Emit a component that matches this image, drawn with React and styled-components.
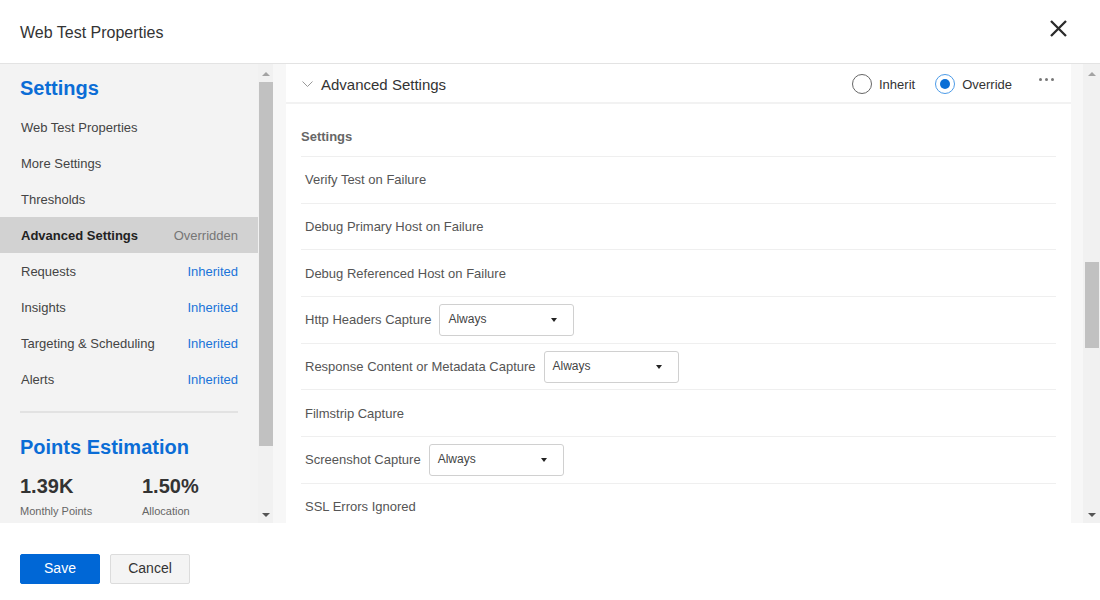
import React from 'react';
import styled, { createGlobalStyle } from 'styled-components';

const GlobalStyle = createGlobalStyle`
  body {
    margin: 0;
    font-family: "Liberation Sans", Arial, sans-serif;
    color: #333;
    background: #fff;
  }
`;

const Page = styled.div`
  width: 1100px;
  height: 600px;
  display: flex;
  flex-direction: column;
  overflow: hidden;
`;

const Header = styled.div`
  height: 64px;
  flex: none;
  display: flex;
  align-items: center;
  justify-content: space-between;
  padding: 0 33px 0 20px;
  box-sizing: border-box;
  border-bottom: 1px solid #e3e3e3;
`;

const Title = styled.div`
  font-size: 16px;
  color: #333;
  margin-top: 2px;
`;

const CloseButton = styled.button`
  border: 0;
  background: none;
  padding: 0;
  display: flex;
  margin-top: -6px;
  cursor: pointer;
`;

const Body = styled.div`
  height: 459px;
  flex: none;
  display: flex;
`;

const Sidebar = styled.div`
  width: 258px;
  flex: none;
  background: #f3f3f3;
  padding-top: 12px;
  box-sizing: border-box;
  overflow: hidden;
`;

const SideHeading = styled.div`
  font-size: 20px;
  line-height: 24px;
  font-weight: bold;
  color: #0b6dd6;
  padding: 0 20px;
  margin-top: ${p => p.$top || 0}px;
`;

const NavList = styled.div`
  margin-top: 9px;
`;

const NavItem = styled.div`
  height: 36px;
  display: flex;
  align-items: center;
  justify-content: space-between;
  padding: 0 20px 0 21px;
  font-size: 13px;
  color: ${p => (p.$active ? '#222' : '#444')};
  font-weight: ${p => (p.$active ? 'bold' : 'normal')};
  background: ${p => (p.$active ? '#d2d2d2' : 'transparent')};
`;

const NavState = styled.span`
  font-weight: normal;
  color: ${p => (p.$override ? '#767676' : '#1a73d9')};
`;

const Divider = styled.div`
  height: 2px;
  background: #e2e2e2;
  margin: 14px 20px 0;
`;

const Stats = styled.div`
  display: flex;
  padding: 0 20px;
  margin-top: 15px;
`;

const Stat = styled.div`
  width: 122px;
  flex: none;
`;

const StatValue = styled.div`
  font-size: 20px;
  line-height: 24px;
  font-weight: bold;
  color: #333;
`;

const StatLabel = styled.div`
  font-size: 11px;
  line-height: 14px;
  color: #666;
  margin-top: 6px;
`;

const Track = styled.div`
  width: ${p => p.$w}px;
  flex: none;
  background: #f1f1f1;
  display: flex;
  flex-direction: column;
  align-items: center;
  padding-top: 2px;
  box-sizing: border-box;
`;

const Arrow = styled.div`
  width: 0;
  height: 0;
  border-left: 4px solid transparent;
  border-right: 4px solid transparent;
  ${p => (p.$down ? 'border-top: 4px solid #555;' : 'border-bottom: 4px solid #a3a3a3;')}
  margin: 6px 0;
`;

const Thumb = styled.div`
  width: ${p => p.$w}px;
  height: ${p => p.$h}px;
  background: #c1c1c1;
  margin-top: ${p => p.$top}px;
`;

const Spacer = styled.div`
  flex: 1;
`;

const Main = styled.div`
  flex: 1;
  display: flex;
  background: #f7f7f7;
  padding: 0 12px 0 13px;
`;

const Card = styled.div`
  flex: 1;
  background: #fff;
  overflow: hidden;
`;

const CardHeader = styled.div`
  height: 40px;
  box-sizing: border-box;
  padding: 2px 17px 0 16px;
  display: flex;
  align-items: center;
  border-bottom: 2px solid #f2f2f2;
`;

const CardTitle = styled.div`
  font-size: 15px;
  color: #333;
  margin-left: 8px;
  flex: 1;
`;

const RadioGroup = styled.div`
  display: flex;
  align-items: center;
  gap: 20px;
  margin-right: 27px;
`;

const RadioLabel = styled.label`
  display: flex;
  align-items: center;
  gap: 7px;
  font-size: 13px;
  color: #333;
`;

const RadioCircle = styled.span`
  width: 18px;
  height: 18px;
  border-radius: 50%;
  border: 1px solid ${p => (p.$checked ? '#4c9be8' : '#666')};
  display: flex;
  align-items: center;
  justify-content: center;
  &::after {
    content: '';
    width: 10px;
    height: 10px;
    border-radius: 50%;
    background: ${p => (p.$checked ? '#0a6fd6' : 'transparent')};
  }
`;

const Dots = styled.div`
  display: flex;
  gap: 3px;
  margin-top: -9px;
  span {
    width: 3px;
    height: 3px;
    border-radius: 50%;
    background: #777;
  }
`;

const Content = styled.div`
  padding: 0 15px;
`;

const SectionTitle = styled.div`
  font-size: 13px;
  font-weight: bold;
  color: #666;
  padding-top: 24px;
  height: 28px;
  line-height: 18px;
  border-bottom: 1px solid #efefef;
`;

const Row = styled.div`
  height: 45.7px;
  display: flex;
  align-items: center;
  padding-left: 4px;
  font-size: 13px;
  color: #555;
  border-bottom: 1px solid #efefef;
`;

const Select = styled.div`
  width: 135px;
  height: 32px;
  box-sizing: border-box;
  margin-left: 8px;
  border: 1px solid #d0d0d0;
  border-radius: 3px;
  display: flex;
  align-items: center;
  justify-content: space-between;
  padding: 0 16px 2px 8px;
  font-size: 12px;
  color: #444;
  &::after {
    content: '';
    border-left: 3px solid transparent;
    border-right: 3px solid transparent;
    border-top: 4px solid #222;
    margin-top: 2px;
  }
`;

const Footer = styled.div`
  flex: 1;
  display: flex;
  gap: 10px;
  padding: 31px 20px 0;
`;

const Button = styled.button`
  width: 80px;
  height: 30px;
  font-family: inherit;
  font-size: 14px;
  border-radius: 2px;
  padding: 0 0 2px;
  border: 1px solid ${p => (p.$primary ? '#0067d6' : '#dcdcdc')};
  background: ${p => (p.$primary ? '#0067d6' : '#f4f4f4')};
  color: ${p => (p.$primary ? '#fff' : '#333')};
`;

const navItems = [
  { label: 'Web Test Properties' },
  { label: 'More Settings' },
  { label: 'Thresholds' },
  { label: 'Advanced Settings', state: 'Overridden', active: true },
  { label: 'Requests', state: 'Inherited' },
  { label: 'Insights', state: 'Inherited' },
  { label: 'Targeting & Scheduling', state: 'Inherited' },
  { label: 'Alerts', state: 'Inherited' },
];

const rows = [
  { label: 'Verify Test on Failure' },
  { label: 'Debug Primary Host on Failure' },
  { label: 'Debug Referenced Host on Failure' },
  { label: 'Http Headers Capture', select: 'Always' },
  { label: 'Response Content or Metadata Capture', select: 'Always' },
  { label: 'Filmstrip Capture' },
  { label: 'Screenshot Capture', select: 'Always' },
  { label: 'SSL Errors Ignored' },
];

const ScrollBar = ({ width, thumbTop, thumbHeight, thumbWidth }) => (
  <Track $w={width}>
    <Arrow />
    <Thumb $w={thumbWidth} $h={thumbHeight} $top={thumbTop} />
    <Spacer />
    <Arrow $down />
  </Track>
);

const App = () => {
  return (
    <Page>
      <GlobalStyle />
      <Header>
        <Title>Web Test Properties</Title>
        <CloseButton>
          <svg width="17" height="17" viewBox="0 0 17 17">
            <path d="M1 1L16 16M16 1L1 16" stroke="#2b2b2b" strokeWidth="2.3" />
          </svg>
        </CloseButton>
      </Header>
      <Body>
        <Sidebar>
          <SideHeading>Settings</SideHeading>
          <NavList>
            {navItems.map(item => (
              <NavItem key={item.label} $active={item.active}>
                <span>{item.label}</span>
                {item.state && (
                  <NavState $override={item.active}>{item.state}</NavState>
                )}
              </NavItem>
            ))}
          </NavList>
          <Divider />
          <SideHeading $top={22}>Points Estimation</SideHeading>
          <Stats>
            <Stat>
              <StatValue>1.39K</StatValue>
              <StatLabel>Monthly Points</StatLabel>
            </Stat>
            <Stat>
              <StatValue>1.50%</StatValue>
              <StatLabel>Allocation</StatLabel>
            </Stat>
          </Stats>
        </Sidebar>
        <ScrollBar width={15} thumbTop={0} thumbHeight={364} thumbWidth={14} />
        <Main>
          <Card>
            <CardHeader>
              <svg width="11" height="7" viewBox="0 0 11 7">
                <path d="M0.5 0.5L5.5 5.5L10.5 0.5" fill="none" stroke="#999" strokeWidth="1" />
              </svg>
              <CardTitle>Advanced Settings</CardTitle>
              <RadioGroup>
                <RadioLabel>
                  <RadioCircle />
                  Inherit
                </RadioLabel>
                <RadioLabel>
                  <RadioCircle $checked />
                  Override
                </RadioLabel>
              </RadioGroup>
              <Dots>
                <span />
                <span />
                <span />
              </Dots>
            </CardHeader>
            <Content>
              <SectionTitle>Settings</SectionTitle>
              {rows.map(row => (
                <Row key={row.label}>
                  {row.label}
                  {row.select && <Select>{row.select}</Select>}
                </Row>
              ))}
            </Content>
          </Card>
        </Main>
        <ScrollBar width={17} thumbTop={180} thumbHeight={86} thumbWidth={14} />
      </Body>
      <Footer>
        <Button $primary>Save</Button>
        <Button>Cancel</Button>
      </Footer>
    </Page>
  );
};

export default App;
